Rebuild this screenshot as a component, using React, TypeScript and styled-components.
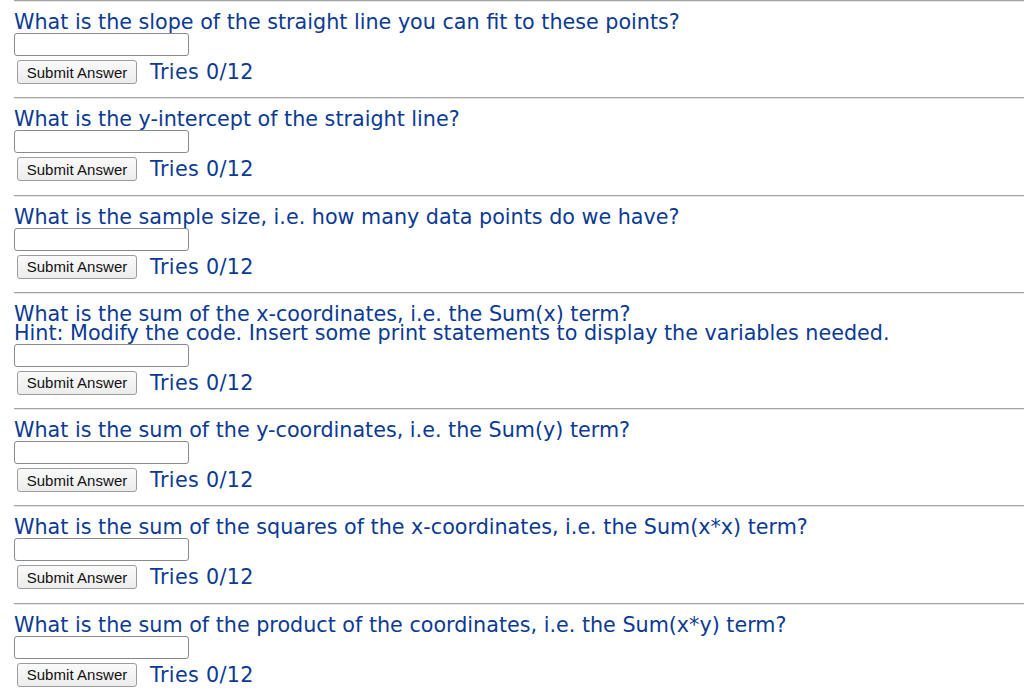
import React from "react";
import styled, { createGlobalStyle } from "styled-components";

const GlobalStyle = createGlobalStyle`
  html, body {
    margin: 0;
    padding: 0;
    background: #ffffff;
  }
  body {
    font-family: "DejaVu Sans", Verdana, sans-serif;
  }
`;

const Page = styled.div`
  padding-left: 14px;
  display: flex;
  flex-direction: column;
`;

const Section = styled.section`
  display: flex;
  flex-direction: column;
  border-top: 1px solid #a3a3a3;
  box-shadow: inset 0 1px 0 #e6e6e6;
  padding: 12px 0 13.3px 0;
`;

const Question = styled.div`
  font-family: "DejaVu Sans", Verdana, sans-serif;
  font-size: 20.7px;
  line-height: 19px;
  color: #0b3a93;
  white-space: nowrap;
`;

const AnswerInput = styled.input`
  box-sizing: border-box;
  width: 175px;
  height: 23px;
  margin: 1px 0 0 0;
  border: 1px solid #8a8a8a;
  border-radius: 3px;
  background: #ffffff;
  padding: 0 4px;
  font-size: 14px;
`;

const ButtonRow = styled.div`
  display: flex;
  align-items: center;
  gap: 13px;
  margin-top: 4px;
  padding-left: 3px;
`;

const SubmitButton = styled.button`
  box-sizing: border-box;
  width: 120px;
  height: 24px;
  padding: 0;
  border: 1px solid #9c9c9c;
  border-radius: 3px;
  background: linear-gradient(#fafafa, #ececec);
  font-family: "Liberation Sans", Arial, sans-serif;
  font-size: 15px;
  letter-spacing: 0.05px;
  color: #111111;
`;

const Tries = styled.span`
  font-family: "DejaVu Sans", Verdana, sans-serif;
  font-size: 20.7px;
  letter-spacing: 0.35px;
  line-height: 24px;
  color: #0b3a93;
`;

type Item = { question: string; hint?: string };

const items: Item[] = [
  { question: "What is the slope of the straight line you can fit to these points?" },
  { question: "What is the y-intercept of the straight line?" },
  { question: "What is the sample size, i.e. how many data points do we have?" },
  {
    question: "What is the sum of the x-coordinates, i.e. the Sum(x) term?",
    hint: "Hint: Modify the code. Insert some print statements to display the variables needed.",
  },
  { question: "What is the sum of the y-coordinates, i.e. the Sum(y) term?" },
  { question: "What is the sum of the squares of the x-coordinates, i.e. the Sum(x*x) term?" },
  { question: "What is the sum of the product of the coordinates, i.e. the Sum(x*y) term?" },
];

export default function App() {
  return (
    <>
      <GlobalStyle />
      <Page>
        {items.map((it, i) => (
          <Section key={i}>
            <Question>{it.question}</Question>
            {it.hint && <Question>{it.hint}</Question>}
            <AnswerInput type="text" />
            <ButtonRow>
              <SubmitButton type="button">Submit Answer</SubmitButton>
              <Tries>Tries 0/12</Tries>
            </ButtonRow>
          </Section>
        ))}
      </Page>
    </>
  );
}
